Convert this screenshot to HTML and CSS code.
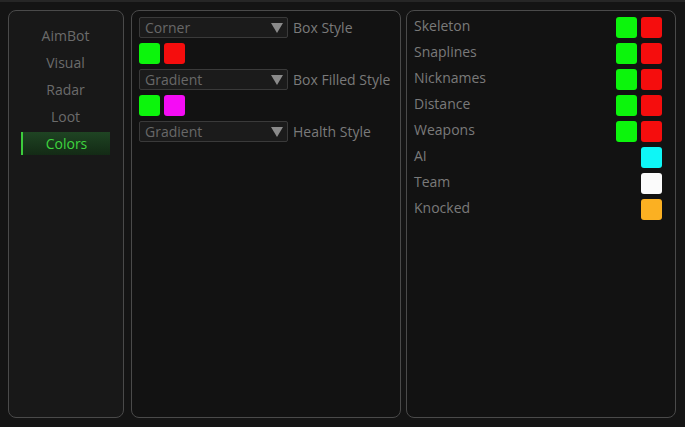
FILE: index.html
```html
<!DOCTYPE html>
<html>
<head>
<meta charset="utf-8">
<link rel="stylesheet" href="styles.css">
</head>
<body>
<div class="window">
  <nav class="panel nav">
    <div class="nav-item">AimBot</div>
    <div class="nav-item">Visual</div>
    <div class="nav-item">Radar</div>
    <div class="nav-item">Loot</div>
    <div class="nav-item active">Colors</div>
  </nav>
  <section class="panel mid">
    <div class="row">
      <div class="combo"><span>Corner</span><i class="arrow"></i></div>
      <span class="label">Box Style</span>
    </div>
    <div class="row">
      <span class="sw green"></span><span class="sw red"></span>
    </div>
    <div class="row">
      <div class="combo"><span>Gradient</span><i class="arrow"></i></div>
      <span class="label">Box Filled Style</span>
    </div>
    <div class="row">
      <span class="sw green"></span><span class="sw magenta"></span>
    </div>
    <div class="row">
      <div class="combo"><span>Gradient</span><i class="arrow"></i></div>
      <span class="label">Health Style</span>
    </div>
  </section>
  <section class="panel right">
    <div class="crow"><span class="label">Skeleton</span><span class="sws"><span class="sw green"></span><span class="sw red"></span></span></div>
    <div class="crow"><span class="label">Snaplines</span><span class="sws"><span class="sw green"></span><span class="sw red"></span></span></div>
    <div class="crow"><span class="label">Nicknames</span><span class="sws"><span class="sw green"></span><span class="sw red"></span></span></div>
    <div class="crow"><span class="label">Distance</span><span class="sws"><span class="sw green"></span><span class="sw red"></span></span></div>
    <div class="crow"><span class="label">Weapons</span><span class="sws"><span class="sw green"></span><span class="sw red"></span></span></div>
    <div class="crow"><span class="label">AI</span><span class="sws"><span class="sw cyan"></span></span></div>
    <div class="crow"><span class="label">Team</span><span class="sws"><span class="sw white"></span></span></div>
    <div class="crow"><span class="label">Knocked</span><span class="sws"><span class="sw orange"></span></span></div>
  </section>
</div>
</body>
</html>
```
FILE: styles.css
```css
* { box-sizing: border-box; }
html, body {
  margin: 0;
  width: 685px;
  height: 427px;
  overflow: hidden;
  background: #141414;
  font-family: "Open Sans", "Noto Sans", sans-serif;
}
.window {
  display: flex;
  padding: 10px 0 0 8px;
  height: 427px;
  background: linear-gradient(to bottom, #262626 0, #262626 2px, #141414 2px);
}
.panel {
  height: 408px;
  border: 1px solid #4a4a4a;
  border-radius: 8px;
  background: #121212;
}
.nav {
  width: 116px;
  margin-right: 7px;
  background: #181818;
  padding: 13px 13px 0 12px;
  display: flex;
  flex-direction: column;
  gap: 4px;
}
.nav-item {
  height: 23px;
  line-height: 23px;
  text-align: center;
  font-size: 14px;
  color: #6b6b6b;
}
.nav-item.active {
  color: #3fd43f;
  background: linear-gradient(to bottom, #1f4423, #132a15);
  border-left: 2px solid #3ccc3c;
}
.mid {
  width: 270px;
  margin-right: 5px;
  padding: 6px 7px;
  display: flex;
  flex-direction: column;
  gap: 5px;
}
.row {
  display: flex;
  align-items: center;
  gap: 4px;
  height: 21px;
}
.combo {
  width: 149px;
  height: 21px;
  background: #1b1b1b;
  border: 1px solid #3a3a3a;
  border-radius: 2px;
  display: flex;
  align-items: center;
  justify-content: space-between;
  padding: 0 4px 0 5px;
  font-size: 14px;
  color: #686868;
  margin-right: 1px;
}
.arrow {
  width: 0;
  height: 0;
  border-left: 6px solid transparent;
  border-right: 6px solid transparent;
  border-top: 10px solid #8a8a8a;
}
.label {
  font-size: 14px;
  color: #7a7a7a;
}
.sw {
  display: inline-block;
  width: 21px;
  height: 21px;
  border-radius: 3px;
}
.green { background: #0cf50c; }
.red { background: #f50d0d; }
.magenta { background: #f50cf5; }
.cyan { background: #0ef6f6; }
.white { background: #fbfbfb; }
.orange { background: #fbb022; }
.right {
  width: 270px;
  padding: 6px 13px 0 7px;
  display: flex;
  flex-direction: column;
  gap: 5px;
}
.crow {
  display: flex;
  align-items: center;
  justify-content: space-between;
  height: 21px;
}
.crow .label { margin-top: -5px; }
.sws {
  display: flex;
  gap: 4px;
}
```
